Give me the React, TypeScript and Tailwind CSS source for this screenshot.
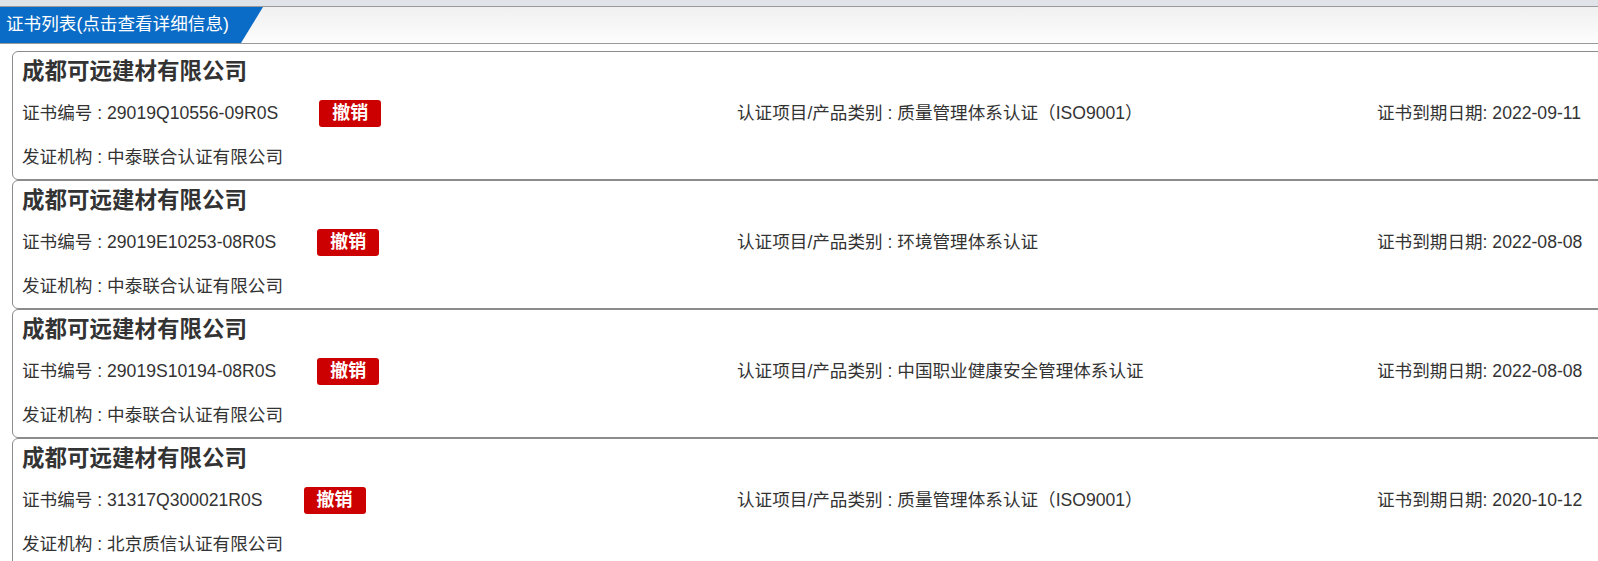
import React from "react";

type Cert = {
  company: string;
  no: string;
  item: string;
  date: string;
  org: string;
};

const certs: Cert[] = [
  { company: "成都可远建材有限公司", no: "29019Q10556-09R0S", item: "质量管理体系认证（ISO9001）", date: "2022-09-11", org: "中泰联合认证有限公司" },
  { company: "成都可远建材有限公司", no: "29019E10253-08R0S", item: "环境管理体系认证", date: "2022-08-08", org: "中泰联合认证有限公司" },
  { company: "成都可远建材有限公司", no: "29019S10194-08R0S", item: "中国职业健康安全管理体系认证", date: "2022-08-08", org: "中泰联合认证有限公司" },
  { company: "成都可远建材有限公司", no: "31317Q300021R0S", item: "质量管理体系认证（ISO9001）", date: "2020-10-12", org: "北京质信认证有限公司" },
];

const font = { fontFamily: '"Liberation Sans", Arial, "Noto Sans CJK SC", sans-serif' };

export default function App() {
  return (
    <div className="w-full h-[561px] overflow-hidden bg-white" style={font}>
      <div className="h-[6px] bg-[#e0e4e8]" />
      <div className="h-[38px] border-y border-[#9a9a9a] bg-gradient-to-b from-[#f0f0f0] to-[#fdfdfd] flex">
        <div className="h-full w-[263px] bg-[#0a6cc6] [clip-path:polygon(0_0,100%_0,241px_100%,0_100%)] flex items-center pl-[6px] text-white text-[17.6px] leading-none">
          证书列表(点击查看详细信息)
        </div>
      </div>
      <div className="mt-[7px] ml-[12px] mr-[-20px]">
        {certs.map((c, i) => (
          <div
            key={i}
            className="border border-[#8c8c8c] rounded-l-[6px] pl-[9px] pt-[2px] text-[#333] text-[17.6px]"
          >
            <div className="h-[36px] leading-[36px] text-[22.5px] font-bold text-[#333]">{c.company}</div>
            <div className="mt-[2px] h-[43px] flex items-center">
              <div className="w-[715px] flex items-center">
                <span>证书编号 : {c.no}</span>
                <span className="ml-[41px] h-[27px] px-[13px] rounded-[3px] bg-[#cc0000] text-white font-bold text-[18px] leading-[27px]">
                  撤销
                </span>
              </div>
              <div className="w-[640px]">认证项目/产品类别 : {c.item}</div>
              <div>证书到期日期: {c.date}</div>
            </div>
            <div className="h-[44px] flex items-center">发证机构 : {c.org}</div>
          </div>
        ))}
      </div>
    </div>
  );
}
